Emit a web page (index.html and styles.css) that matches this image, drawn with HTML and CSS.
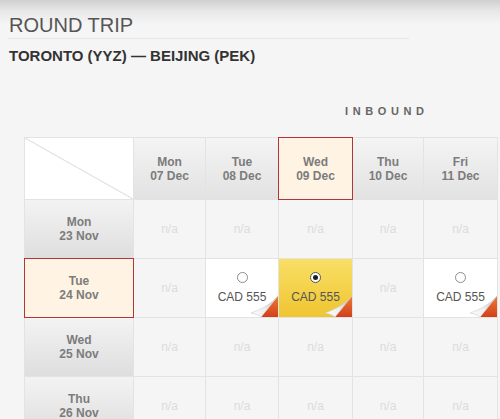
FILE: index.html
```html
<!DOCTYPE html>
<html>
<head>
<meta charset="utf-8">
<link rel="stylesheet" href="styles.css">
</head>
<body>
<div class="page">
  <h1 class="trip-title">ROUND TRIP</h1>
  <h2 class="route">TORONTO (YYZ) — BEIJING (PEK)</h2>
  <div class="inbound">INBOUND</div>
  <div class="grid">
    <div class="corner"></div>
    <div class="col-head"><span>Mon</span><span>07 Dec</span></div>
    <div class="col-head"><span>Tue</span><span>08 Dec</span></div>
    <div class="col-head is-selected"><span>Wed</span><span>09 Dec</span></div>
    <div class="col-head"><span>Thu</span><span>10 Dec</span></div>
    <div class="col-head"><span>Fri</span><span>11 Dec</span></div>

    <div class="row-head"><span>Mon</span><span>23 Nov</span></div>
    <div class="na">n/a</div>
    <div class="na">n/a</div>
    <div class="na">n/a</div>
    <div class="na">n/a</div>
    <div class="na">n/a</div>

    <div class="row-head is-selected"><span>Tue</span><span>24 Nov</span></div>
    <div class="na">n/a</div>
    <div class="fare">
      <span class="radio"></span><span class="price">CAD 555</span>
      <svg class="fold" viewBox="0 0 28 21" width="28" height="21"><defs><linearGradient id="r1" x1="0" y1="0" x2="0" y2="1"><stop offset="0" stop-color="#ee7a38"/><stop offset="1" stop-color="#d2401a"/></linearGradient><linearGradient id="w1" x1="0" y1="1" x2="1" y2="0"><stop offset="0" stop-color="#ffffff"/><stop offset="0.45" stop-color="#eeeeee"/><stop offset="1" stop-color="#b0b0b0"/></linearGradient></defs><path d="M28 0 L28 21 L11 21 Z" fill="url(#r1)"/><path d="M28 0 C21 8 12 13 1 17 C6 18 9 19 11 21 C17 14 22 7 28 0 Z" fill="url(#w1)" stroke="#cfcfcf" stroke-width="0.6"/></svg>
    </div>
    <div class="fare is-chosen">
      <span class="radio is-on"></span><span class="price">CAD 555</span>
      <svg class="fold" viewBox="0 0 28 21" width="28" height="21"><defs><linearGradient id="r2" x1="0" y1="0" x2="0" y2="1"><stop offset="0" stop-color="#ee7a38"/><stop offset="1" stop-color="#d2401a"/></linearGradient><linearGradient id="w2" x1="0" y1="1" x2="1" y2="0"><stop offset="0" stop-color="#ffffff"/><stop offset="0.45" stop-color="#eeeeee"/><stop offset="1" stop-color="#b0b0b0"/></linearGradient></defs><path d="M28 0 L28 21 L11 21 Z" fill="url(#r2)"/><path d="M28 0 C21 8 12 13 1 17 C6 18 9 19 11 21 C17 14 22 7 28 0 Z" fill="url(#w2)" stroke="#cfcfcf" stroke-width="0.6"/></svg>
    </div>
    <div class="na">n/a</div>
    <div class="fare">
      <span class="radio"></span><span class="price">CAD 555</span>
      <svg class="fold" viewBox="0 0 28 21" width="28" height="21"><defs><linearGradient id="r3" x1="0" y1="0" x2="0" y2="1"><stop offset="0" stop-color="#ee7a38"/><stop offset="1" stop-color="#d2401a"/></linearGradient><linearGradient id="w3" x1="0" y1="1" x2="1" y2="0"><stop offset="0" stop-color="#ffffff"/><stop offset="0.45" stop-color="#eeeeee"/><stop offset="1" stop-color="#b0b0b0"/></linearGradient></defs><path d="M28 0 L28 21 L11 21 Z" fill="url(#r3)"/><path d="M28 0 C21 8 12 13 1 17 C6 18 9 19 11 21 C17 14 22 7 28 0 Z" fill="url(#w3)" stroke="#cfcfcf" stroke-width="0.6"/></svg>
    </div>

    <div class="row-head"><span>Wed</span><span>25 Nov</span></div>
    <div class="na">n/a</div>
    <div class="na">n/a</div>
    <div class="na">n/a</div>
    <div class="na">n/a</div>
    <div class="na">n/a</div>

    <div class="row-head"><span>Thu</span><span>26 Nov</span></div>
    <div class="na">n/a</div>
    <div class="na">n/a</div>
    <div class="na">n/a</div>
    <div class="na">n/a</div>
    <div class="na">n/a</div>
  </div>
</div>
</body>
</html>
```
FILE: styles.css
```css
html, body {
  margin: 0;
  padding: 0;
}
body {
  background-color: #f5f5f5;
  background-image: linear-gradient(#cfcfcf 0, #e6e6e6 10px, #f5f5f5 24px);
  background-repeat: no-repeat;
  background-size: 100% 30px;
  font-family: "Liberation Sans", Arial, sans-serif;
  overflow: hidden;
}
.page {
  display: flex;
  flex-direction: column;
  align-items: flex-start;
}
.trip-title {
  margin: 0 0 0 8px;
  padding: 13px 0 1px 1px;
  width: 400px;
  font-size: 20px;
  line-height: 24px;
  font-weight: normal;
  color: #555;
  border-bottom: 1px solid #e6e6e6;
}
.route {
  margin: 8px 0 0 9px;
  font-size: 15px;
  line-height: 18px;
  font-weight: bold;
  color: #333;
}
.inbound {
  margin: 40px 0 0 345px;
  font-size: 11px;
  line-height: 13px;
  font-weight: bold;
  letter-spacing: 4.6px;
  color: #666;
}
.grid {
  margin: 19px 0 0 24px;
  display: grid;
  grid-template-columns: 108px 71px 72px 73px 70px 73px;
  grid-template-rows: 61px repeat(4, 58px);
  gap: 1px;
  padding: 1px;
  background: #e3e3e3;
}
.corner {
  background: linear-gradient(to top right, #fff calc(50% - 1px), #dedede 50%, #fff calc(50% + 1px));
}
.col-head, .row-head {
  display: flex;
  flex-direction: column;
  align-items: center;
  justify-content: center;
  font-size: 12px;
  line-height: 14px;
  font-weight: bold;
  color: #7c7c7c;
}
.col-head {
  background: linear-gradient(#f4f4f4, #e2e2e2);
}
.row-head {
  background: linear-gradient(#f3f3f3, #dedede);
}
.col-head.is-selected, .row-head.is-selected {
  background: #fff4e3;
  outline: 1px solid #b5343a;
  position: relative;
  z-index: 1;
}
.na {
  background: #f5f5f5;
  display: flex;
  align-items: center;
  justify-content: center;
  font-size: 12px;
  color: #dcdcdc;
}
.fare {
  position: relative;
  background: #fff;
  display: flex;
  flex-direction: column;
  align-items: center;
  padding-top: 13px;
  gap: 7px;
  overflow: hidden;
}
.fare.is-chosen {
  background: linear-gradient(#f9df66, #efc531);
}
.radio {
  width: 11px;
  height: 11px;
  box-sizing: border-box;
  border: 1px solid #8c8c8c;
  border-radius: 50%;
  background: #fff;
  display: flex;
  align-items: center;
  justify-content: center;
}
.radio.is-on {
  border-color: #555;
}
.radio.is-on::after {
  content: "";
  width: 5px;
  height: 5px;
  border-radius: 50%;
  background: #1e1e1e;
}
.price {
  font-size: 12px;
  line-height: 14px;
  color: #555;
}
.fold {
  position: absolute;
  right: 0;
  bottom: 0;
  display: block;
}
```
